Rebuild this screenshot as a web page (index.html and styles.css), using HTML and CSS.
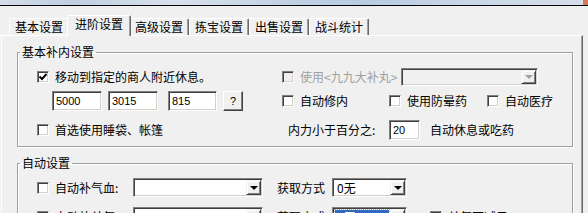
FILE: index.html
```html
<!DOCTYPE html>
<html lang="zh-CN">
<head>
<meta charset="utf-8">
<title>进阶设置</title>
<link rel="stylesheet" href="styles.css">
</head>
<body>
<div class="titlebar"><div class="close"></div></div>
<div class="tabs">
  <div class="tab">基本设置</div>
  <div class="tab active">进阶设置</div>
  <div class="tab">高级设置</div>
  <div class="tab">拣宝设置</div>
  <div class="tab">出售设置</div>
  <div class="tab">战斗统计</div>
</div>
<div class="panel">
  <fieldset class="group g1">
    <legend>基本补内设置</legend>
    <div class="gbody">
      <div class="row r1">
        <div class="left">
          <label class="chk"><span class="box"><svg width="10" height="10" viewBox="0 0 10 10"><path d="M1.5 4.5 L4 7 L8.5 2" fill="none" stroke="#000" stroke-width="1.9"/></svg></span>移动到指定的商人附近休息。</label>
        </div>
        <div class="right">
          <label class="chk disabled w119"><span class="box"></span>使用&lt;九九大补丸&gt;</label>
          <div class="combo disabled w137"><span class="val"></span><span class="dd"><i></i></span></div>
        </div>
      </div>
      <div class="row r2">
        <div class="left">
          <div class="edit w50 first">5000</div>
          <div class="edit w50 g6">3015</div>
          <div class="edit w49 g10">815</div>
          <div class="btn g6">?</div>
        </div>
        <div class="right">
          <label class="chk w107"><span class="box"></span>自动修内</label>
          <label class="chk w98"><span class="box"></span>使用防晕药</label>
          <label class="chk"><span class="box"></span>自动医疗</label>
        </div>
      </div>
      <div class="row r3">
        <div class="left">
          <label class="chk"><span class="box"></span>首选使用睡袋、帐篷</label>
        </div>
        <div class="right">
          <span class="txt lbl-pct">内力小于百分之:</span>
          <div class="edit w31">20</div>
          <span class="txt lbl-after">自动休息或吃药</span>
        </div>
      </div>
    </div>
  </fieldset>
  <fieldset class="group g2">
    <legend>自动设置</legend>
    <div class="gbody">
      <div class="row r4">
        <label class="chk w96"><span class="box"></span>自动补气血:</label>
        <div class="combo w130"><span class="val"></span><span class="dd"><i></i></span></div>
        <span class="txt lbl-way">获取方式</span>
        <div class="combo w75"><span class="val">0无</span><span class="dd"><i></i></span></div>
      </div>
      <div class="row r5">
        <label class="chk w96"><span class="box"></span>自动补关气:</label>
        <div class="combo w130"><span class="val"></span><span class="dd"><i></i></span></div>
        <span class="txt lbl-way">获取方式</span>
        <div class="combo w75"><span class="val sel">0无</span><span class="dd"><i></i></span></div>
        <label class="chk extra"><span class="box"></span>关气不减风</label>
      </div>
    </div>
  </fieldset>
</div>
</body>
</html>
```

FILE: styles.css
```css
* { box-sizing: border-box; }
html, body { margin: 0; padding: 0; }
body {
  width: 588px;
  height: 213px;
  overflow: hidden;
  background: #f0f0f0;
  font-family: "Noto Sans CJK SC", "Liberation Sans", sans-serif;
  font-size: 12px;
  line-height: 12px;
  color: #000;
}

.titlebar {
  height: 6px;
  border-bottom: 1px solid #000;
  background: linear-gradient(90deg, #d4dde8 0%, #bfcfe2 12%, #d8e1eb 30%, #c2d2e5 48%, #b8cbe1 62%, #cad7e7 80%, #d5deea 100%);
  display: flex;
  justify-content: flex-end;
}
.titlebar .close { width: 5px; height: 5px; background: #d9774f; }

.tabs {
  display: flex;
  align-items: flex-end;
  height: 30px;
  padding-left: 9px;
  position: relative;
  z-index: 1;
}
.tab {
  width: 60px;
  height: 17px;
  margin-bottom: 1px;
  padding: 2px 0 0 5px;
  border-top: 1px solid #fff;
  border-left: 1px solid #fff;
  border-right: 1px solid #696969;
  box-shadow: inset -1px 0 #a0a0a0;
  border-radius: 2px 2px 0 0;
  white-space: nowrap;
  background: #f0f0f0;
}
.tab.active {
  width: 64px;
  height: 21px;
  margin: 0 -2px;
  padding: 2px 0 0 7px;
  position: relative;
  z-index: 2;
}

.panel {
  margin-top: -1px;
  margin-left: 1px;
  width: 582px;
  height: 180px;
  border-top: 1px solid #fff;
  border-left: 1px solid #fff;
  border-right: 1px solid #696969;
  box-shadow: inset -1px 0 #a0a0a0;
  padding-left: 15px;
}

.group {
  margin: 0;
  padding: 0;
  width: 556px;
  min-width: 0;
  border: 1px solid #a0a0a0;
  box-shadow: inset 1px 1px #fff, 1px 1px #fff;
}
.group legend {
  margin-left: 2px;
  padding: 0 2px;
  line-height: 12px;
  height: 12px;
}
.gbody { padding-left: 19px; }
.g1 { margin-top: 10px; }
.g1 .gbody { padding-top: 10px; padding-bottom: 6px; }
.g2 { margin-top: 10px; height: 80px; }
.g2 .gbody { padding-top: 9px; }

.row { display: flex; align-items: center; }
.r1 { height: 18px; }
.r2 { height: 20px; margin-top: 5px; }
.r3 { height: 20px; margin-top: 9px; }
.r4 { height: 19px; }
.r5 { height: 19px; margin-top: 10px; }
.left { width: 245px; display: flex; align-items: center; height: 100%; }
.right { display: flex; align-items: center; height: 100%; }

.chk { display: flex; align-items: center; white-space: nowrap; }
.box {
  width: 12px;
  height: 12px;
  margin-right: 6px;
  flex: none;
  background: #fff;
  border: 1px solid;
  border-color: #808080 #fff #fff #808080;
  box-shadow: inset 1px 1px #404040, inset -1px -1px #d4d0c8;
  display: flex;
  align-items: center;
  justify-content: center;
}
.chk.disabled { color: #a0a0a0; }
.chk.disabled .box { background: #f0f0f0; }
.w119 { width: 119px; }
.w107 { width: 107px; }
.w98 { width: 98px; }
.w96 { width: 96px; }

.edit {
  height: 20px;
  background: #fff;
  border: 1px solid;
  border-color: #808080 #fff #fff #808080;
  box-shadow: inset 1px 1px #404040, inset -1px -1px #d4d0c8;
  font-family: "Liberation Sans", sans-serif;
  font-size: 11px;
  padding-left: 3px;
  display: flex;
  align-items: center;
}
.w50 { width: 50px; }
.w49 { width: 49px; }
.w31 { width: 31px; }
.first { margin-left: 15px; }
.g6 { margin-left: 6px; }
.g10 { margin-left: 10px; }

.btn {
  width: 20px;
  height: 20px;
  border: 1px solid;
  border-color: #fff #404040 #404040 #fff;
  box-shadow: inset -1px -1px #808080;
  font-family: "Liberation Sans", sans-serif;
  font-size: 11px;
  display: flex;
  align-items: center;
  justify-content: center;
}

.txt { white-space: nowrap; }
.lbl-pct { margin-left: 6px; width: 101px; }
.lbl-after { margin-left: 10px; }
.lbl-way { margin-left: 14px; width: 55px; }

.combo {
  display: flex;
  height: 19px;
  background: #fff;
  border: 1px solid;
  border-color: #808080 #fff #fff #808080;
  box-shadow: inset 1px 1px #404040, inset -1px -1px #d4d0c8;
  padding: 1px;
}
.combo.disabled { background: #f0f0f0; height: 18px; }
.w137 { width: 137px; }
.w130 { width: 130px; }
.w75 { width: 75px; }
.combo .val {
  flex: 1;
  display: flex;
  align-items: center;
  padding-left: 2px;
  margin: 1px 1px 1px 1px;
  white-space: nowrap;
}
.combo .val.sel { background: #316ac5; color: #fff; outline: 1px dotted #9ab; }
.dd {
  width: 15px;
  flex: none;
  background: #f0f0f0;
  border: 1px solid;
  border-color: #f0f0f0 #404040 #404040 #f0f0f0;
  box-shadow: inset 1px 1px #fff, inset -1px -1px #808080;
  display: flex;
  align-items: center;
  justify-content: center;
}
.dd i {
  width: 0;
  height: 0;
  border-left: 4px solid transparent;
  border-right: 4px solid transparent;
  border-top: 4px solid #000;
}
.combo.disabled .dd i { border-top-color: #a0a0a0; }
.extra { margin-left: 23px; }
```
